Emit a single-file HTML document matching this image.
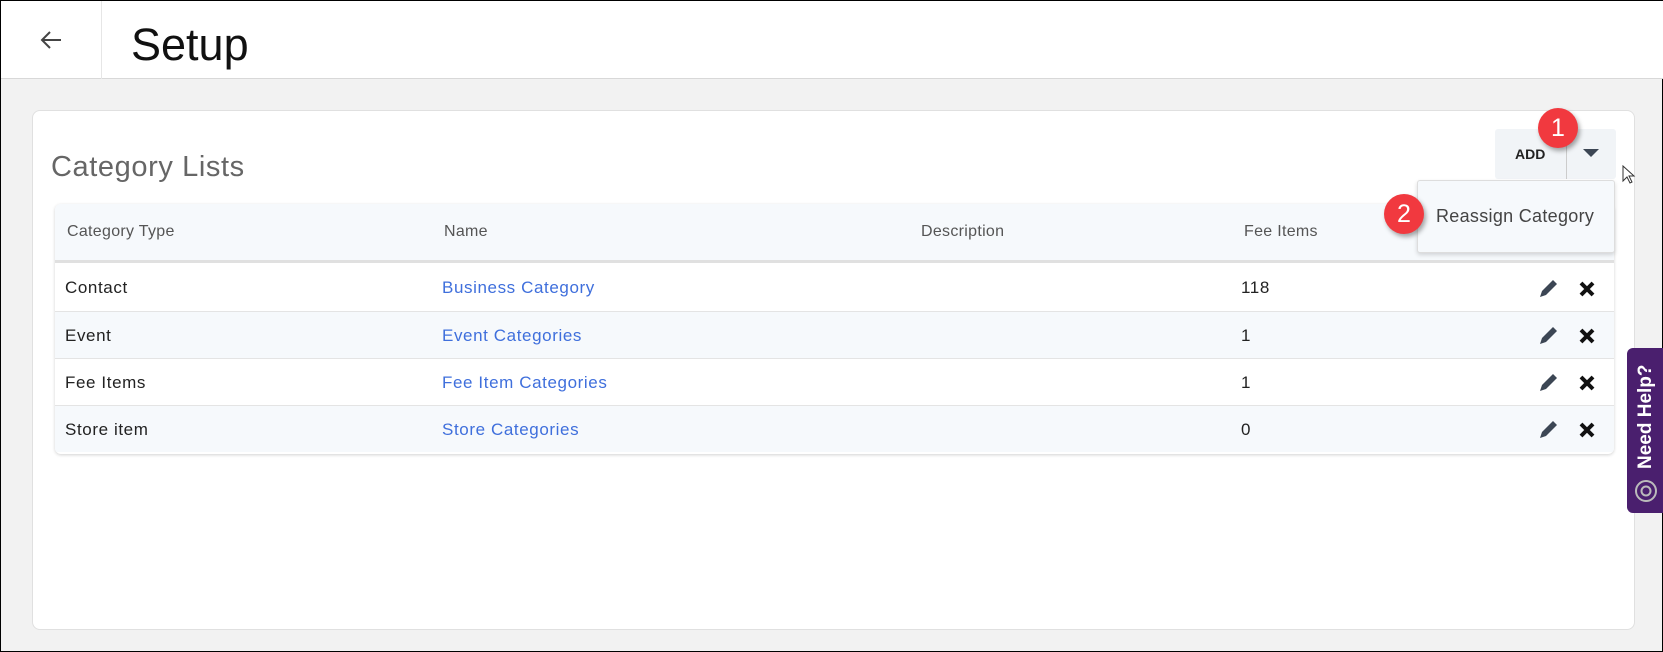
<!DOCTYPE html>
<html><head><style>
*{box-sizing:border-box;margin:0;padding:0}
body{width:1663px;height:652px;background:#f2f2f2;font-family:"Liberation Sans",sans-serif;position:relative;overflow:hidden;border:1px solid #000}
.hdr{position:absolute;left:0;top:0;width:1663px;height:78px;background:#fff;border-bottom:1px solid #d8d8d8}
.div{position:absolute;left:100px;top:0;width:1px;height:78px;background:#e6e6e6}
.card{position:absolute;left:31px;top:109px;width:1603px;height:520px;background:#fff;border:1px solid #e0e0e0;border-radius:8px}
.t{position:absolute;white-space:nowrap}
.tbl{position:absolute;left:54px;top:203px;width:1559px;height:250px;border-radius:6px;box-shadow:0 1px 3px rgba(0,0,0,.18);background:#fff;overflow:hidden}
.row{position:absolute;left:0;width:100%;height:47px;border-top:1px solid #e4e4e4}
.cell{position:absolute;top:14px;font-size:17px;color:#222;letter-spacing:.6px}
.hc{top:19px;color:#555;font-size:16px;letter-spacing:.3px}
.lnk{color:#3f6fdc}
.badge{position:absolute;width:40px;height:40px;border-radius:50%;background:#f1393f;color:#fff;font-size:25px;text-align:center;line-height:40px;box-shadow:2px 3px 5px rgba(0,0,0,.35)}
</style></head><body>
<div class="hdr"></div><div class="div"></div>
<svg class="t" style="left:38px;top:28px" width="24" height="22" viewBox="0 0 24 22"><path d="M22 11H3M11 3L3 11l8 8" fill="none" stroke="#444" stroke-width="2"/></svg>
<div class="t" style="left:130px;top:18px;font-size:45px;color:#111">Setup</div>
<div class="card"></div>
<div class="t" style="left:50px;top:150px;font-size:29px;color:#666;letter-spacing:.6px">Category Lists</div>
<div class="tbl">
 <div style="position:absolute;left:0;top:0;width:100%;height:59px;background:#f6f9fc;border-bottom:3px solid #e0e0e0"></div>
 <div class="cell hc" style="left:12px">Category Type</div>
 <div class="cell hc" style="left:389px">Name</div>
 <div class="cell hc" style="left:866px">Description</div>
 <div class="cell hc" style="left:1189px">Fee Items</div>
 <div class="row" style="top:60px;border:0;background:#fff"><div class="cell" style="left:10px">Contact</div><div class="cell lnk" style="left:387px">Business Category</div><div class="cell" style="left:1186px">118</div></div>
 <div class="row" style="top:107px;background:#f6f9fc"><div class="cell" style="left:10px">Event</div><div class="cell lnk" style="left:387px">Event Categories</div><div class="cell" style="left:1186px">1</div></div>
 <div class="row" style="top:154px;background:#fff"><div class="cell" style="left:10px">Fee Items</div><div class="cell lnk" style="left:387px">Fee Item Categories</div><div class="cell" style="left:1186px">1</div></div>
 <div class="row" style="top:201px;background:#f6f9fc"><div class="cell" style="left:10px">Store item</div><div class="cell lnk" style="left:387px">Store Categories</div><div class="cell" style="left:1186px">0</div></div>
</div>
<svg class="t" style="left:1535px;top:275px" width="80" height="170">
 <g fill="#3c4654"><path d="M4 21l2-6 11-11 4 4-11 11z"/></g>
 <g fill="#3c4654" transform="translate(0,47)"><path d="M4 21l2-6 11-11 4 4-11 11z"/></g>
 <g fill="#3c4654" transform="translate(0,94)"><path d="M4 21l2-6 11-11 4 4-11 11z"/></g>
 <g fill="#3c4654" transform="translate(0,141)"><path d="M4 21l2-6 11-11 4 4-11 11z"/></g>
 <g stroke="#111" stroke-width="4"><path d="M45 7l12 12M57 7L45 19"/><path d="M45 54l12 12M57 54L45 66"/><path d="M45 101l12 12M57 101L45 113"/><path d="M45 148l12 12M57 148L45 160"/></g>
</svg>
<div class="t" style="left:1494px;top:128px;width:121px;height:50px;background:#f1f4f7;border-radius:3px"></div>
<div class="t" style="left:1565px;top:134px;width:1px;height:44px;background:#ccc"></div>
<div class="t" style="left:1514px;top:145px;font-size:14px;font-weight:bold;color:#222">ADD</div>
<svg class="t" style="left:1582px;top:148px" width="16" height="9"><path d="M0 0h16L8 8z" fill="#3c4654"/></svg>
<div class="t" style="left:1416px;top:179px;width:198px;height:73px;background:#f6f9fc;border:1px solid #ddd;border-radius:3px;box-shadow:0 2px 4px rgba(0,0,0,.15)"></div>
<div class="t" style="left:1435px;top:205px;font-size:18px;color:#444;letter-spacing:.3px">Reassign Category</div>
<div class="badge" style="left:1537px;top:107px">1</div>
<div class="badge" style="left:1383px;top:193px">2</div>
<svg class="t" style="left:1621px;top:164px" width="14" height="20"><path d="M1 1v15l4-4 3 6 2-1-3-6h5z" fill="#fff" stroke="#333"/></svg>
<div class="t" style="left:1626px;top:347px;width:37px;height:165px;background:#4a1f6e;border-radius:6px 0 0 6px"></div>
<div class="t" style="left:1634px;top:468px;transform:rotate(-90deg);transform-origin:0 0;font-size:19px;font-weight:bold;color:#fff">Need Help?</div>
<svg class="t" style="left:1633px;top:478px" width="24" height="24"><circle cx="12" cy="12" r="10" fill="none" stroke="#bbb" stroke-width="2"/><circle cx="12" cy="12" r="4.5" fill="none" stroke="#bbb" stroke-width="2"/></svg>
</body></html>
